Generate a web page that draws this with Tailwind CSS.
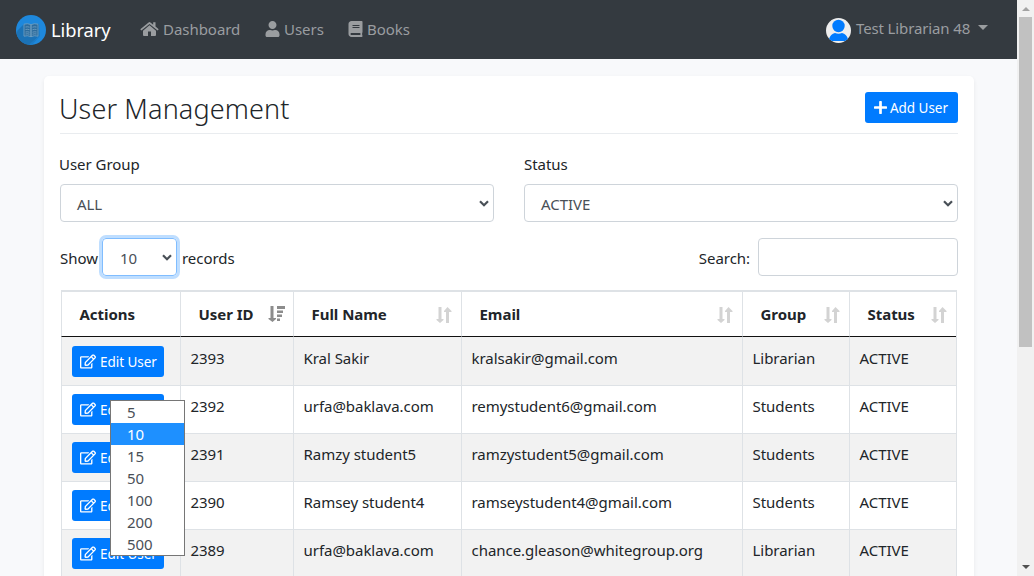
<!DOCTYPE html>
<html lang="en">
<head>
<meta charset="utf-8">
<title>Library - User Management</title>
<script src="https://cdn.jsdelivr.net/npm/@tailwindcss/browser@4"></script>
</head>
<body class="h-[576px] overflow-hidden bg-[#f8f9fb] font-['Noto_Sans','Open_Sans',sans-serif] text-[15px] leading-6 tracking-[-0.04px] text-[#212529]">
<svg class="hidden">
  <symbol id="edit" viewBox="0 0 576 512"><path fill="currentColor" d="M402.300 344.900l32-32c5-5 13.700-1.500 13.700 5.700V464c0 26.500-21.500 48-48 48H48c-26.500 0-48-21.500-48-48V112c0-26.500 21.500-48 48-48h273.500c7.100 0 10.700 8.600 5.700 13.700l-32 32c-1.500 1.500-3.500 2.300-5.700 2.300H48v352h352V350.500c0-2.100.8-4.100 2.300-5.600zm156.600-201.800L296.300 405.700l-90.400 10c-26.200 2.900-48.500-19.200-45.600-45.600l10-90.400L432.900 17.100c22.900-22.900 59.900-22.900 82.700 0l43.200 43.200c22.900 22.900 22.900 60 .1 82.800zM460.100 174L402 115.900 216.200 301.800l-7.300 65.300 65.300-7.300L460.100 174zm64.800-79.700l-43.200-43.200c-4.100-4.100-10.800-4.100-14.800 0L436 82l58.100 58.100 30.900-30.900c4-4.200 4-10.800-.1-14.900z"/></symbol>
  <symbol id="sort" viewBox="0 0 16 18"><path fill="#d3d3d3" d="M2.500 1h3v12h2v1L4 17 .500 14v-1h2zM10 17h3V6h2.500V5L11.500 1 8 5v1h2z"/></symbol>
  <symbol id="chev" viewBox="0 0 10 7"><path d="M1 1.200L5 5.200L9 1.200" fill="none" stroke="#495057" stroke-width="2.200"/></symbol>
</svg>
<div class="flex h-full">
<div class="h-full w-[1017px] shrink-0 overflow-hidden">
  <nav class="flex h-[59px] items-center bg-[#343a40] pl-4 text-[#9a9da0]">
    <svg class="h-[30px] w-[30px]" viewBox="0 0 30 30">
      <circle cx="15" cy="15" r="15" fill="#1e88dc"/>
      <path d="M8 9L1.500 15.500Q.5 17 1 20.500A15 15 0 0 0 13 29.900L23 21V9z" fill="#1b72b6"/>
      <path d="M23 9v12l-10 8.900a15 15 0 0 0 3 0L24 21z" fill="#1c7cc8"/>
      <g fill="#2d6c9d" stroke="#75a3c4" stroke-width=".8"><path d="M8 9.200q3.500-1.200 7 .5v12q-3.500-1.700-7-.5zM22 9.200q-3.500-1.200-7 .5v12q3.500-1.700 7-.5z"/><path d="M9.500 12q2-.5 4 .2M9.500 14.500q2-.5 4 .2M9.500 17q2-.5 4 .2M9.500 19q2-.5 4 .2M16.500 12.200q2-.7 4-.2M16.500 14.700q2-.7 4-.2M16.500 17.200q2-.7 4-.2M16.500 19.200q2-.7 4-.2" fill="none"/></g>
    </svg>
    <span class="ml-[5px] w-[89px] pt-px text-[18.300px] text-white">Library</span>
    <svg class="mb-0.5 h-4 w-[19px]" viewBox="0 0 19 16"><path fill="currentColor" d="M9.500 1Q9 1 8.600 1.400L.3 8.300l1.100 1.300L9.500 3l8.100 6.600 1.100-1.300L15.500 5.600V1.200h-2.300v2.500L10.400 1.400Q10 1 9.500 1zM9.500 4.300L3 9.700V14q0 1 1 1h4v-4.500h3V15h4q1 0 1-1V9.700z"/></svg>
    <span class="ml-1 w-[102px] pb-0.5">Dashboard</span>
    <svg class="mb-0.5 h-4 w-[15px]" viewBox="0 0 448 512"><path fill="currentColor" d="M224 256c70.700 0 128-57.300 128-128S294.700 0 224 0 96 57.300 96 128s57.300 128 128 128zm89.600 32h-16.700c-22.200 10.200-46.900 16-72.900 16s-50.600-5.800-72.900-16h-16.700C60.200 288 0 348.200 0 422.400V464c0 26.500 21.500 48 48 48h352c26.500 0 48-21.500 48-48v-41.600c0-74.200-60.200-134.400-134.400-134.400z"/></svg>
    <span class="ml-1 w-[64px] pb-0.5">Users</span>
    <svg class="mb-0.5 h-4 w-[15px]" viewBox="0 0 448 512"><path fill="currentColor" d="M448 360V24c0-13.300-10.700-24-24-24H96C43 0 0 43 0 96v320c0 53 43 96 96 96h328c13.300 0 24-10.700 24-24v-16c0-7.500-3.500-14.300-8.900-18.700-4.200-15.400-4.200-59.300 0-74.700 5.400-4.300 8.900-11.100 8.900-18.600zM128 134c0-3.300 2.700-6 6-6h212c3.300 0 6 2.700 6 6v20c0 3.300-2.700 6-6 6H134c-3.300 0-6-2.700-6-6v-20zm0 64c0-3.300 2.700-6 6-6h212c3.300 0 6 2.700 6 6v20c0 3.300-2.700 6-6 6H134c-3.300 0-6-2.700-6-6v-20zm253.400 250H96c-17.700 0-32-14.300-32-32 0-17.600 14.400-32 32-32h285.400c-1.900 17.100-1.900 46.900 0 64z"/></svg>
    <span class="ml-1 pb-0.5">Books</span>
    <svg class="ml-auto mt-px h-[25px] w-[25px]" viewBox="0 0 25 25"><defs><clipPath id="av"><circle cx="12.500" cy="12.500" r="12.500"/></clipPath></defs><circle cx="12.500" cy="12.500" r="12.500" fill="#eee"/><g clip-path="url(#av)"><circle cx="12.500" cy="8" r="6.200" fill="#007bff"/><path d="M3 23V21q1.500-5 6-6 3.500 1.500 7 0 4.500 1 6 6v2z" fill="#007bff"/></g></svg>
    <span class="ml-[5px] w-[122px] pb-[3px] whitespace-nowrap tracking-[-0.13px]">Test Librarian 48</span>
    <svg class="mr-[29px] mb-1 h-[5px] w-2.5" viewBox="0 0 10 5"><path fill="currentColor" d="M0 0h10L5 5z"/></svg>
  </nav>

  <main class="mx-[44px] mt-[17px] h-[520px] w-[930px] rounded-[5px] bg-white px-4 shadow-[0_2px_4px_rgba(0,0,0,0.075)]">
    <div class="flex h-[58px] items-start justify-between border-b border-[#e9ecef] pt-4">
      <h1 class="-ml-px text-[27px] leading-[33px] font-light tracking-[0.13px]">User Management</h1>
      <button class="flex h-[31px] w-[93px] items-center rounded-[3px] bg-[#007bff] pl-[9px] text-[13.500px] text-white">
        <svg class="mr-[3px] h-[13px] w-[13px]" viewBox="0 0 13 13"><path d="M6.500.5v12M.5 6.500h12" stroke="#fff" stroke-width="3" stroke-linecap="round" transform="translate(.65 .65) scale(.9)"/></svg>Add User
      </button>
    </div>

    <div class="mt-[18px] grid grid-cols-2 gap-[30px]">
      <div>
        <div class="mb-2 -ml-px">User Group</div>
        <div class="flex h-[38px] items-center justify-between rounded border border-[#ced4da] pr-1 pl-4 text-[#495057]"><span class="pt-0.5">ALL</span><svg class="h-[7px] w-2.5"><use href="#chev"/></svg></div>
      </div>
      <div>
        <div class="mb-2">Status</div>
        <div class="flex h-[38px] items-center justify-between rounded border border-[#ced4da] pr-1 pl-4 text-[#495057]"><span class="pt-0.5">ACTIVE</span><svg class="h-[7px] w-2.5"><use href="#chev"/></svg></div>
      </div>
    </div>

    <div class="mt-4 flex h-[38px] items-center">
      <span class="w-[42px] pt-0.5">Show</span>
      <div class="relative flex h-[38px] w-[75px] items-center justify-between rounded border border-[#80bdff] pr-1 pl-[17px] text-[#495057] shadow-[0_0_0_3px_#bfdeff]">
        <span class="pt-0.5">10</span><svg class="h-[7px] w-2.5"><use href="#chev"/></svg>
        <ul class="absolute top-[161px] left-[7px] z-10 h-[156px] w-[75px] border border-[#767676] bg-white text-[15px] leading-[22px]">
          <li class="h-[22px] pl-4">5</li>
          <li class="h-[22px] bg-[#1e90ff] pl-4 text-white">10</li>
          <li class="h-[22px] pl-4">15</li>
          <li class="h-[22px] pl-4">50</li>
          <li class="h-[22px] pl-4">100</li>
          <li class="h-[22px] pl-4">200</li>
          <li class="h-[22px] pl-4">500</li>
        </ul>
      </div>
      <span class="ml-[5px] pt-0.5">records</span>
      <span class="mr-2 ml-auto pt-0.5">Search:</span>
      <div class="h-[38px] w-[200px] rounded border border-[#ced4da]"></div>
    </div>

    <table class="mt-[14px] ml-px w-[896px] table-fixed border-separate border-spacing-0 border-r border-[#dee2e6]">
      <colgroup><col class="w-[119px]"><col class="w-[113px]"><col class="w-[168px]"><col class="w-[281px]"><col class="w-[107px]"><col class="w-[107px]"></colgroup>
      <thead>
        <tr class="h-[47px] text-left [&>th]:border-t-2 [&>th]:border-b [&>th]:border-l [&>th]:border-t-[#dee2e6] [&>th]:border-b-[#111] [&>th]:border-l-[#dee2e6] [&>th]:py-0 [&>th]:pr-[9px] [&>th]:pl-[17.5px] [&>th]:font-bold">
          <th>Actions</th>
          <th><div class="-mr-px flex items-center justify-between">User ID<svg class="h-[18px] w-[17px]" viewBox="0 0 17 18"><path fill="#8c8c8c" d="M2.500 1h3v12H8v1L4.500 17 .500 14v-1h2zM9 1h8v3H9zM9 5.500h6v2.500H9zM9 9.500h5V12H9zM9 13.500h3V16H9z"/></svg></div></th>
          <th><div class="flex items-center justify-between">Full Name<svg class="mt-0.5 h-[18px] w-4"><use href="#sort"/></svg></div></th>
          <th><div class="flex items-center justify-between">Email<svg class="mt-0.5 h-[18px] w-4"><use href="#sort"/></svg></div></th>
          <th><div class="flex items-center justify-between">Group<svg class="mt-0.5 h-[18px] w-4"><use href="#sort"/></svg></div></th>
          <th><div class="flex items-center justify-between">Status<svg class="mt-0.5 h-[18px] w-4"><use href="#sort"/></svg></div></th>
        </tr>
      </thead>
      <tbody id="rows"></tbody>
    </table>
  </main>
</div>
<div class="flex h-full w-[17px] flex-col items-center bg-[#f1f1f1]">
  <svg class="mt-[7px] h-1 w-2" viewBox="0 0 8 4"><path fill="#a3a3a3" d="M0 4h8L4 0z"/></svg>
  <div class="mt-1.5 h-[330px] w-[13px] bg-[#c1c1c1]"></div>
  <svg class="mt-auto mb-[7px] h-1 w-2" viewBox="0 0 8 4"><path fill="#505050" d="M0 0h8L4 4z"/></svg>
</div>
</div>
<script>
const users = [
  ["2393", "Kral Sakir", "kralsakir@gmail.com", "Librarian"],
  ["2392", "urfa@baklava.com", "remystudent6@gmail.com", "Students"],
  ["2391", "Ramzy student5", "ramzystudent5@gmail.com", "Students"],
  ["2390", "Ramsey student4", "ramseystudent4@gmail.com", "Students"],
  ["2389", "urfa@baklava.com", "chance.gleason@whitegroup.org", "Librarian"]
];
document.getElementById("rows").innerHTML = users.map((u, i) => `
  <tr class="${i ? "h-12" : "h-[49px]"} odd:bg-[#f2f2f2] [&>td]:border-b [&>td]:border-l [&>td]:border-[#dee2e6] [&>td]:p-0 [&>td]:pl-[10px] [&>td]:align-top [&>td]:whitespace-nowrap">
    <td><button class="${i ? "mt-2" : "mt-[9px]"} flex h-[31px] w-[92px] items-center rounded-[3px] bg-[#007bff] pl-2 text-[13.500px] text-white"><svg class="mr-1 h-[15px] w-4"><use href="#edit"/></svg>Edit User</button></td>
    ${[...u, "ACTIVE"].map(t => `<td><div class="-ml-[0.5px] ${i ? "pt-2" : "pt-[9px]"}">${t}</div></td>`).join("")}
  </tr>`).join("");
</script>
</body>
</html>
